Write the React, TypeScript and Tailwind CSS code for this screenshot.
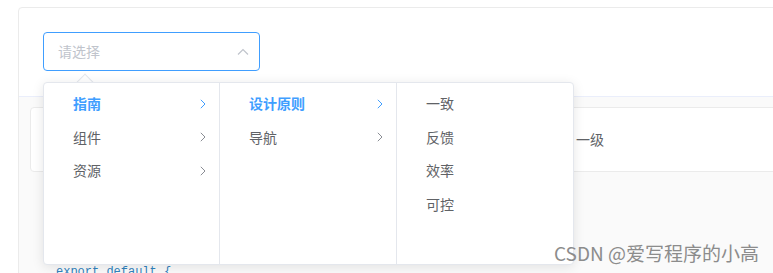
import { ReactNode } from 'react';

const cjk = { fontFamily: '"Noto Sans CJK SC", "Noto Sans", sans-serif' };

function Chevron({ active }: { active?: boolean }) {
  return (
    <svg width="6" height="10" viewBox="0 0 6 10" className={active ? 'text-[#409eff]' : 'text-[#8a8d94]'}>
      <path d="M0.8 0.8 L5 5 L0.8 9.2" fill="none" stroke="currentColor" strokeWidth="1" />
    </svg>
  );
}

function Item({ label, active, arrow }: { label: string; active?: boolean; arrow?: boolean }) {
  return (
    <div className="flex h-[33.6px] items-center justify-between pl-[29px] pr-[13px]">
      <span className={`text-[14px] ${active ? 'font-bold text-[#409eff]' : 'text-[#606266]'}`}>{label}</span>
      {arrow && <Chevron active={active} />}
    </div>
  );
}

function Column({ children, last, width }: { children: ReactNode; last?: boolean; width: string }) {
  return <div className={`${width} h-full py-[4px] ${last ? '' : 'border-r border-[#e4e7ed]'}`}>{children}</div>;
}

export default function App() {
  return (
    <div className="relative h-[273px] w-[773px] overflow-hidden bg-white" style={cjk}>
      <div className="ml-[18px] mt-[7px] w-[800px] rounded-[4px] border border-[#ebebeb]">
        <div className="h-[88px] px-[24px] pt-[24px]">
          <div className="relative w-[217px]">
            <div className="flex h-[39px] items-center justify-between rounded-[4px] border border-[#409eff] pl-[14px] pr-[10px]">
              <span className="text-[14px] text-[#c0c4cc]">请选择</span>
              <svg width="12" height="8" viewBox="0 0 12 8" className="text-[#c0c4cc]">
                <path d="M1 6.5 L6 1.5 L11 6.5" fill="none" stroke="currentColor" strokeWidth="1.2" />
              </svg>
            </div>
            <div className="absolute left-0 top-[50px] z-10">
              <div className="absolute left-[36px] top-[-6px] h-[12px] w-[12px] rotate-45 border-l border-t border-[#e4e7ed] bg-white" />
              <div className="relative flex h-[183px] rounded-[4px] border border-[#e4e7ed] bg-white shadow-[0_2px_12px_rgba(0,0,0,0.1)]">
                <Column width="w-[176px]">
                  <Item label="指南" active arrow />
                  <Item label="组件" arrow />
                  <Item label="资源" arrow />
                </Column>
                <Column width="w-[177px]">
                  <Item label="设计原则" active arrow />
                  <Item label="导航" arrow />
                </Column>
                <Column width="w-[176px]" last>
                  <Item label="一致" />
                  <Item label="反馈" />
                  <Item label="效率" />
                  <Item label="可控" />
                </Column>
              </div>
            </div>
          </div>
        </div>
        <div className="h-[200px] border-t border-[#eaeefb] bg-[#fafafa] pl-[11px] pt-[10px]">
          <div className="flex h-[65px] items-center rounded-[4px] border border-[#ebebeb] bg-white pl-[545px]">
            <span className="text-[14px] text-[#606266]">一级</span>
          </div>
          <div className="pl-[26px] pt-[92px] font-['Liberation_Mono',monospace] text-[12px] leading-[16px] text-[#3182bd]">
            export default {'{'}
          </div>
        </div>
      </div>
      <div className="absolute left-[554px] top-[239px] z-20 text-[19px] text-[#8c8c8c]" style={{ fontFamily: '"Noto Sans CJK SC", sans-serif' }}>
        CSDN @爱写程序的小高
      </div>
    </div>
  );
}
